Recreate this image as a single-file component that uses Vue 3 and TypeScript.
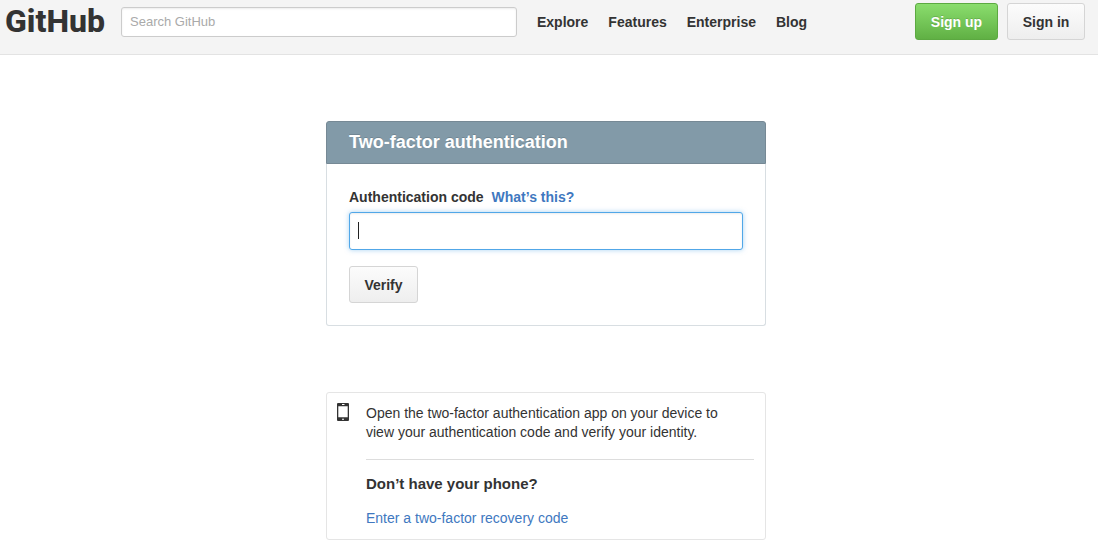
<script setup lang="ts">
import { onMounted, ref } from 'vue'

const links: string[] = ['Explore', 'Features', 'Enterprise', 'Blog']
const query = ref('')
const code = ref('')
const codeInput = ref<HTMLInputElement | null>(null)

onMounted(() => codeInput.value?.focus())
</script>

<template>
  <div class="page">
    <header class="header">
      <a href="#" class="logo">GitHub</a>
      <input v-model="query" class="search" type="text" placeholder="Search GitHub" aria-label="Search GitHub" />
      <nav class="nav">
        <a v-for="link in links" :key="link" href="#">{{ link }}</a>
      </nav>
      <div class="actions">
        <button type="button" class="button primary">Sign up</button>
        <button type="button" class="button">Sign in</button>
      </div>
    </header>

    <main class="content">
      <form class="auth" @submit.prevent>
        <h1>Two-factor authentication</h1>
        <div class="auth-body">
          <div class="label">
            <label for="otp">Authentication code</label>
            <a href="#">What’s this?</a>
          </div>
          <div class="field">
            <input
              id="otp"
              ref="codeInput"
              v-model="code"
              class="code"
              :class="{ empty: !code }"
              type="text"
              autocomplete="off"
            />
            <span v-if="!code" class="caret"></span>
          </div>
          <button type="submit" class="button verify">Verify</button>
        </div>
      </form>

      <section class="help">
        <svg class="phone" width="12" height="18" viewBox="0 0 12 18" aria-hidden="true">
          <path
            fill="#333"
            fill-rule="evenodd"
            d="M1 0h10a1 1 0 0 1 1 1v16a1 1 0 0 1-1 1H1a1 1 0 0 1-1-1V1a1 1 0 0 1 1-1zM1.300 3.200v11h9.400v-11zM5 1v1h2.500V1zM5 15.700v1h2v-1z"
          />
        </svg>
        <div class="help-text">
          <p>Open the two-factor authentication app on your device to view your authentication code and verify your identity.</p>
          <hr />
          <h2>Don’t have your phone?</h2>
          <a href="#">Enter a two-factor recovery code</a>
        </div>
      </section>
    </main>
  </div>
</template>

<style>
body {
  margin: 0;
  background: #fff;
}
</style>

<style scoped>
.page {
  color: #333;
  font: 14px/19px "Liberation Sans", Arial, sans-serif;
}

.page * {
  box-sizing: border-box;
}

a {
  color: #4078c0;
  text-decoration: none;
}

input,
button {
  font-family: inherit;
}

.header {
  display: flex;
  align-items: flex-start;
  height: 55px;
  padding: 0 13px 0 5px;
  background: #f4f4f4;
  border-bottom: 1px solid #e3e3e3;
}

.logo {
  flex: none;
  width: 116px;
  color: #333;
  font: 800 32px/42px Roboto, sans-serif;
}

.search {
  flex: 0 1 396px;
  min-width: 80px;
  height: 30px;
  margin-top: 7px;
  padding: 0 8px 2px;
  color: #333;
  font-size: 13px;
  background: #fff;
  border: 1px solid #ccc;
  border-radius: 3px;
  box-shadow: inset 0 1px 2px rgba(0, 0, 0, 0.075);
  outline: none;
}

.search::placeholder {
  color: #aaa;
}

.nav {
  display: flex;
  gap: 20px;
  margin: 13px 0 0 20px;
  font-weight: bold;
}

.nav a {
  color: #333;
}

.actions {
  display: flex;
  gap: 9px;
  margin: 3px 0 0 auto;
}

.button {
  height: 37px;
  padding: 0 13px;
  color: #333;
  font-size: 14px;
  font-weight: bold;
  white-space: nowrap;
  background: linear-gradient(#fcfcfc, #eee);
  border: 1px solid #d5d5d5;
  border-radius: 3px;
}

.actions .button {
  min-width: 78px;
}

.actions .primary {
  min-width: 83px;
  color: #fff;
  text-shadow: 0 -1px 0 rgba(0, 0, 0, 0.15);
  background: linear-gradient(#8add6d, #60b044);
  border-color: #5ca941;
}

.content {
  display: flex;
  flex-direction: column;
  align-items: center;
  gap: 66px;
  padding: 66px 6px 11px 0;
}

.auth,
.help {
  width: 440px;
  max-width: 100%;
}

.auth h1 {
  margin: 0;
  padding: 10px 22px;
  color: #fff;
  font-size: 18px;
  line-height: 21px;
  text-shadow: 0 -1px 0 rgba(0, 0, 0, 0.15);
  background: #829aa8;
  border: 1px solid #768995;
  border-radius: 3px 3px 0 0;
}

.auth-body {
  padding: 24px 22px 22px;
  border: 1px solid #d8dee2;
  border-top: 0;
  border-radius: 0 0 3px 3px;
}

.label {
  display: flex;
  gap: 8px;
  margin-bottom: 5px;
  font-weight: bold;
}

.field {
  position: relative;
}

.code {
  display: block;
  width: 100%;
  height: 38px;
  padding: 0 8px;
  color: #333;
  font-size: 16px;
  border: 1px solid #51a7e8;
  border-radius: 3px;
  outline: none;
  box-shadow: inset 0 1px 2px rgba(0, 0, 0, 0.075), 0 0 5px rgba(81, 167, 232, 0.5);
}

.code.empty {
  caret-color: transparent;
}

.caret {
  position: absolute;
  top: 10px;
  left: 9px;
  width: 1px;
  height: 17px;
  background: #222;
  pointer-events: none;
}

.verify {
  display: block;
  min-width: 69px;
  margin-top: 16px;
}

.help {
  display: flex;
  gap: 17px;
  padding: 10px 11px 11px 10px;
  border: 1px solid #e5e5e5;
  border-radius: 3px;
}

.phone {
  flex: none;
}

.help-text {
  flex: 1;
  padding-top: 1px;
}

.help p {
  margin: 0;
  padding-right: 16px;
}

.help hr {
  height: 1px;
  margin: 17px 0 14px;
  background: #ddd;
  border: 0;
}

.help h2 {
  margin: 0 0 16px;
  font-size: 15px;
  line-height: 19px;
}

.help a {
  display: block;
}
</style>
